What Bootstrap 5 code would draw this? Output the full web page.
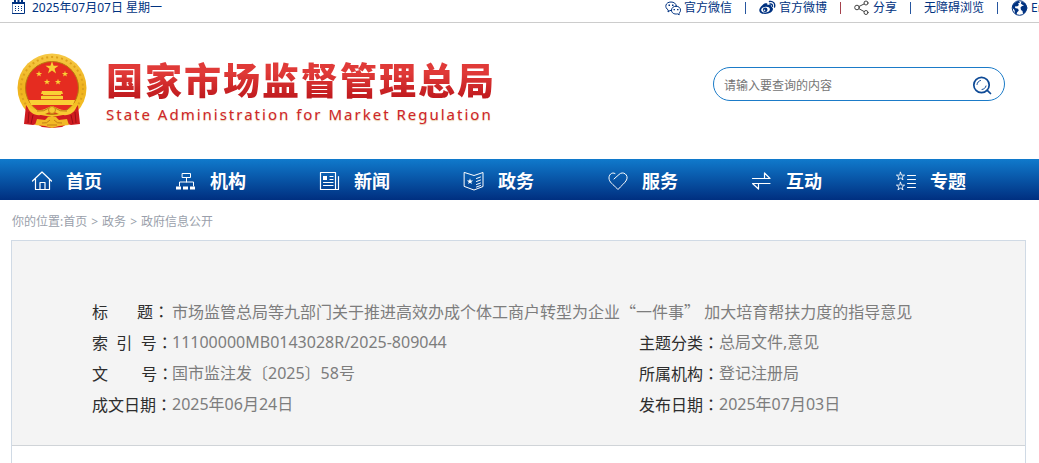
<!DOCTYPE html>
<html lang="zh-CN">
<head>
<meta charset="utf-8">
<meta name="viewport" content="width=device-width, initial-scale=1">
<title>国家市场监督管理总局</title>
<link href="https://cdn.jsdelivr.net/npm/bootstrap@5.3.0/dist/css/bootstrap.min.css" rel="stylesheet">
<style>
body{font-family:"Noto Sans","Noto Sans CJK SC",sans-serif;font-size:12px;line-height:16px;overflow-x:hidden;background:#fff}
svg{display:block;flex:none}
a{text-decoration:none;color:inherit}
.topbar{color:#003281;height:23px;border-bottom:1px solid #ccc;overflow:hidden}
.topdate{flex:0 0 64%;padding-left:12px}
.topdate time{margin-left:7px}
.toplinks li{display:flex;align-items:center;height:16px}
.toplinks li+li::before{content:"";width:1px;height:12px;background:#27569f;margin:0 13px}
.toplinks li:nth-child(3)::before{background:#a5414c}
.toplinks a{display:flex;align-items:center;gap:3px}
.site-head{height:136px;padding:0 34px 0 17px}
.site-head .logo{color:#d0242a;gap:19px}
.logo-cn{font:900 37px/42px "Liberation Sans","Noto Sans CJK SC",sans-serif;letter-spacing:2px;background:linear-gradient(#e03a38 25%,#c01a1e 85%);-webkit-background-clip:text;background-clip:text;color:transparent}
.logo-en{font:15px/20px "Noto Sans",sans-serif;letter-spacing:2px;text-shadow:0 1px 1px #e3c9a6}
.search{width:292px;height:34px;border:1px solid #1b7bc8;border-radius:17px;padding:0 12px 0 10px;margin-top:-14px}
.search .form-control{font-size:12px;line-height:16px;border:0;background:none;padding:4px 0 0;box-shadow:none}
.search .form-control::placeholder{color:#757575}
.search .btn{padding:2px 0 0;border:0;color:#0e4a96}
.mainnav{background:linear-gradient(#107acc,#002f80);padding-left:31px;color:#fff;font-size:18px;font-weight:700;line-height:24px}
.mainnav li{flex:1 1 0}
.mainnav a{display:flex;align-items:center;gap:13px;height:41px;padding-top:2px;white-space:nowrap}
.ln{fill:none;stroke:currentColor;stroke-linecap:round;stroke-linejoin:round}
.crumbs{color:#9a9fab;padding:14px 12px 10px;gap:4px}
.sheet{margin:0 13px 0 11px;border:1px solid #d0dae5;border-bottom:0;min-height:223px}
.meta{background:#f4f4f4;border-bottom:1px solid #d0d4d8;padding:55px 0 25px 80px;font-size:16px;line-height:31px;color:#7d7d7d}
.meta dl{display:flex;height:31px;margin:0}
.meta dt{flex:0 0 80px;min-width:0;font-weight:400;color:#2d2d2d;white-space:nowrap}
.meta dt i{font-family:"Noto Sans CJK TC",sans-serif;font-style:normal}
.meta dd{margin:0}
.meta .pair{display:grid;grid-template-columns:547fr 386fr}
.q{font-family:"Noto Sans CJK SC",sans-serif}
</style>
</head>
<body>
<div class="topbar d-flex text-nowrap">
  <div class="topdate d-flex align-items-start">
    <svg width="13" height="14" viewBox="0 0 13 14"><path class="ln" d="M.5 2.500h12v11H.5z"/><path fill="currentColor" d="M0 2h13v2H0zM2 0h2v3H2zm3.500 0h2v3h-2zM9 0h2v3H9zM3 6h1v1H3zm3 0h1v1H6zm3 0h1v1H9zM3 8h1v1H3zm3 0h1v1H6zm3 0h1v1H9zM3 10h1v1H3zm3 0h1v1H6zm3 0h1v1H9z"/></svg>
    <time datetime="2025-07-07">2025年07月07日 星期一</time>
  </div>
  <ul class="toplinks list-unstyled d-flex mb-0">
    <li><a href="#"><svg width="16" height="16" viewBox="0 0 16 16"><path class="ln" d="M6.500 10.500H5l-2 1.500.3-2C-1 7.500.5 2 6 2c3 0 5 1.500 5.400 4"/><path class="ln" d="M11 6.200c3 0 4.500 1.800 4.500 4 0 1.300-.6 2.300-1.500 3l.2 1.600-1.700-.9c-3.500.6-6-1-6-3.700 0-2.200 1.800-4 4.500-4z"/><path fill="currentColor" d="M3.500 4.500h1.500V6H3.500zM7 4.500h1.500V6H7zM8.500 9H10v1.200H8.500zm3.500 0h1.500v1.200H12z"/></svg>官方微信</a></li>
    <li><a href="#"><svg width="17" height="16" viewBox="0 0 17 16"><path fill="currentColor" fill-rule="evenodd" d="M6.300 3.300C8 2.800 8.800 3.500 8.400 5.200c2.200-.8 4-.4 3.600 1.600 3 .8 2.300 4.200-.4 5.700C8 14.800.5 14.500.3 10.400.2 7.500 4 4 6.300 3.300zM6.700 6.700C4 7 2 8.500 2.200 10.300c.2 1.600 2.300 2.500 4.700 2.200 2.400-.3 4.200-1.700 4-3.500-.2-1.600-2-2.500-4.200-2.300z"/><circle cx="6.200" cy="9.800" r="2.300" fill="currentColor"/><circle cx="5.500" cy="10.300" r=".8" fill="#fff"/><path class="ln" stroke-width="1.400" d="M10.500 1.500c3.500-.8 6 2 5 5.500M11 4c1.700-.3 2.700.8 2.300 2.400"/></svg>官方微博</a></li>
    <li><a href="#"><svg width="16" height="16" viewBox="0 0 16 16" color="#444"><g class="ln"><circle cx="3" cy="7.500" r="2.300"/><circle cx="12" cy="3" r="2"/><circle cx="12" cy="12.500" r="2"/><path d="M5 6.500 10 4M5 8.700l5 2.800"/></g></svg>分享</a></li>
    <li><a href="#">无障碍浏览</a></li>
    <li><a href="#"><svg width="17" height="16" viewBox="0 0 17 16"><circle class="ln" cx="8.500" cy="8" r="7.300"/><path fill="currentColor" d="M1.500 6C2.500 3 5 1.500 8 1l1 1.500-2 1 1 1.500-2 1.500-1.500-.5L4 8l3 .8.8 1.700L6 12.500 5.500 15 4 13.500 3.500 10 1.500 8zM10.500 1.500 14 3.300l1.700 3-.2 3.500-2 3.500-1.500.7-.5-3-1.500-1-.5-2.500 1.500-1.500 2-.2L11 4.500 9.800 3.500z"/></svg>English</a></li>
  </ul>
</div>

<header class="site-head d-flex align-items-center justify-content-between">
  <a class="logo d-flex align-items-center" href="#">
    <svg width="70" height="76" viewBox="0 0 70 76" aria-label="国徽">
      <defs><linearGradient id="gold" x1="0" y1="0" x2="0" y2="1"><stop offset="0" stop-color="#f6c945"/><stop offset=".5" stop-color="#efb21d"/><stop offset="1" stop-color="#f8c92c"/></linearGradient>
      <path id="st" d="M0-5 1.200-1.600 4.800-1.600 1.900.6 3 4 0 1.900-3 4-1.900.6-4.800-1.600-1.200-1.600z"/></defs>
      <circle cx="35" cy="35" r="34.500" fill="url(#gold)"/>
      <circle cx="35" cy="35" r="31" fill="none" stroke="#dca01c" stroke-width="2" stroke-dasharray="2 3"/>
      <circle cx="35" cy="35" r="26.500" fill="#e52c20" stroke="#b9790e"/>
      <g fill="#f9cf35"><use href="#st" transform="translate(35 15) scale(1.350)"/><use href="#st" transform="translate(22 21) scale(.65)"/><use href="#st" transform="translate(48 21) scale(.65)"/><use href="#st" transform="translate(30 29) scale(.65)"/><use href="#st" transform="translate(41 29) scale(.65)"/>
      <path d="M25 38h20l1 3h-2v2h2v3H24v-3h2v-2h-2zM12 47h46l-2 5H14z"/></g>
      <path stroke="#dd5a1b" fill="none" d="M25 42.500h20M24 46.500h22"/>
      <path fill="#d01c20" d="M9 52c4 6 9 9 15 10l11 2 11-2c6-1 11-4 15-10l2 19-9 1-4-1-5 3-10 1-10-1-5-3-4 1-9-1z"/>
      <path stroke="#9e0d14" fill="none" d="M12 59l-1 11M16 62l-2 9M58 59l1 11M54 62l2 9"/>
      <path fill="#f7c833" d="M10 52c6 7 14 6 20 3l5-2 5 2c6 3 14 4 20-3-2 9-10 12-18 9l-7-3-7 3c-8 3-16 0-18-9z"/>
      <path stroke="#b97a14" fill="none" d="M20 58q7 1 12-3M50 58q-7 1-12-3"/>
      <circle cx="35" cy="57" r="3.500" fill="#f7c833" stroke="#c98716"/>
      <path fill="#f2b926" d="m20 66 8 1 3-3h8l3 3 8-1 2 6-10 1-7 2-7-2-10-1z"/>
      <path stroke="#c47d15" fill="none" d="M25 70q5 1 8-3M45 70q-5 1-8-3M30 72h10"/>
    </svg>
    <span class="d-block pt-1">
      <span class="logo-cn d-block">国家市场监督管理总局</span>
      <span class="logo-en d-block">State Administration for Market Regulation</span>
    </span>
  </a>
  <form class="search d-flex align-items-center">
    <input class="form-control" type="text" aria-label="搜索" placeholder="请输入要查询的内容">
    <button class="btn" type="button" aria-label="查询"><svg width="20" height="20" viewBox="0 0 20 20"><g class="ln"><circle cx="9.500" cy="10" r="7.700" stroke-width="1.700"/><path stroke-width="1.700" d="m15.300 15.300 3.200 3.200"/><path d="M5 9.500c.3-2 1.500-3.500 3.500-4M10 14.500c2-.3 3.500-1.500 4-3.500"/></g></svg></button>
  </form>
</header>

<nav class="mainnav" aria-label="主导航">
  <ul class="list-unstyled d-flex mb-0">
    <li><a href="#"><svg width="22" height="20" viewBox="0 0 22 20"><path class="ln" stroke-width="1.200" d="m1.500 10 9.500-9 9.500 9M4.500 8v10.500h14V8M9 18.500v-7h5v7"/></svg>首页</a></li>
    <li><a href="#"><svg width="22" height="20" viewBox="0 0 22 20"><path class="ln" d="M7.500 2.500h8v4h-8zM11.500 7v4M4.500 15v-4h14v4"/><path fill="currentColor" d="M1 15.500h5v3H1zm7 0h5v3H8zm7 0h5v3h-5z"/></svg>机构</a></li>
    <li><a href="#"><svg width="22" height="20" viewBox="0 0 22 20"><path class="ln" stroke-width="1.200" d="M1.500 1.500h15v17h-15zM16.500 18.500h3v-13M11 5.500h3M11 8.500h3M4.500 11.500h9.500M4.500 14.500h9.500"/><path fill="currentColor" d="M4 5h4v4H4z"/></svg>新闻</a></li>
    <li><a href="#"><svg width="22" height="20" viewBox="0 0 22 20"><path class="ln" d="M1.500 1.500 11 4.500l9-3v14l-9 3.500-9.500-3.500zM13.500 7.500l4-1.500M13.500 10.500l4-1.500M13.500 13.500l4-1.500M13.500 16l4-1.500"/><use href="#st" fill="currentColor" transform="translate(7 10.500) scale(.65)"/></svg>政务</a></li>
    <li><a href="#"><svg width="22" height="20" viewBox="0 0 22 20"><path class="ln" d="m7 8 5-4.500c4-4 10 .5 7.500 5.500C18 12 14 15 11 18.500 8 15 3 12 2.200 8.500 1 4 5 .5 8 2.500"/></svg>服务</a></li>
    <li><a href="#"><svg width="22" height="20" viewBox="0 0 22 20"><path class="ln" stroke-width="1.200" d="M1.500 7.500h17.500L13.500 2v5M19 12.500H1.500L7.500 18v-5"/></svg>互动</a></li>
    <li><a href="#"><svg width="22" height="20" viewBox="0 0 22 20"><g class="ln"><use href="#st" transform="translate(5.500 5.500) scale(.85)"/><use href="#st" transform="translate(5.500 15.500) scale(.85)"/><path d="M12.500 4.500H20.500M12.500 8.500H20.500M12.500 12.500H20.500M12.500 16.500H20.500"/></g></svg>专题</a></li>
  </ul>
</nav>

<nav class="crumbs d-flex" aria-label="位置">
  <span>你的位置:<a href="#">首页</a></span><span>&gt;</span><a href="#">政务</a><span>&gt;</span><a href="#">政府信息公开</a>
</nav>

<main class="sheet">
  <div class="meta">
    <dl><dt>标&nbsp;&nbsp;&nbsp;&nbsp;&nbsp;&nbsp;&nbsp;题<i lang="zh-TW">：</i></dt><dd>市场监管总局等九部门关于推进高效办成个体工商户转型为企业<span class="q">“</span>一件事<span class="q">”</span> 加大培育帮扶力度的指导意见</dd></dl>
    <div class="pair">
      <dl><dt>索&nbsp;&nbsp;引&nbsp;&nbsp;号<i lang="zh-TW">：</i></dt><dd>11100000MB0143028R/2025-809044</dd></dl>
      <dl><dt>主题分类<i lang="zh-TW">：</i></dt><dd>总局文件,意见</dd></dl>
      <dl><dt>文&nbsp;&nbsp;&nbsp;&nbsp;&nbsp;&nbsp;&nbsp;&nbsp;号<i lang="zh-TW">：</i></dt><dd>国市监注发〔2025〕58号</dd></dl>
      <dl><dt>所属机构<i lang="zh-TW">：</i></dt><dd>登记注册局</dd></dl>
      <dl><dt>成文日期<i lang="zh-TW">：</i></dt><dd>2025年06月24日</dd></dl>
      <dl><dt>发布日期<i lang="zh-TW">：</i></dt><dd>2025年07月03日</dd></dl>
    </div>
  </div>
</main>
<script src="https://cdn.jsdelivr.net/npm/bootstrap@5.3.0/dist/js/bootstrap.bundle.min.js"></script>
</body>
</html>
